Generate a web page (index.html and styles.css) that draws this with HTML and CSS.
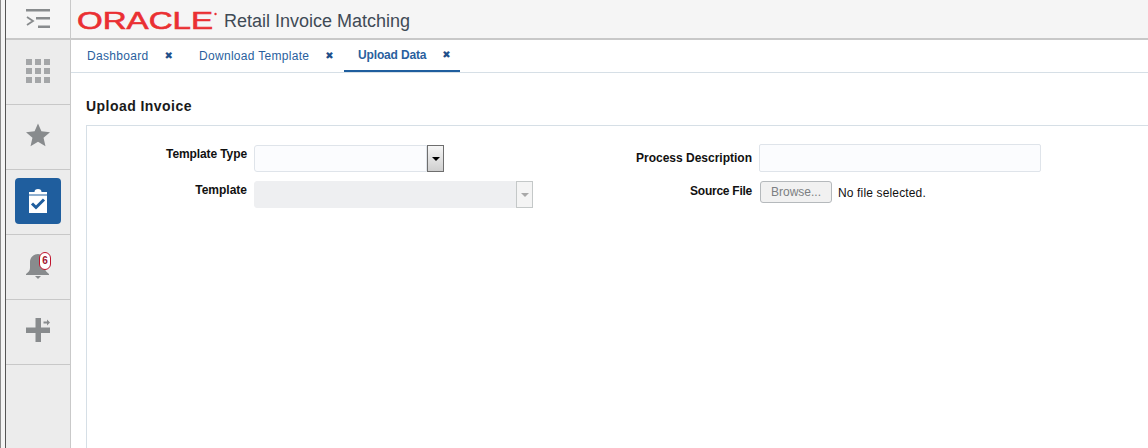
FILE: index.html
```html
<!DOCTYPE html>
<html lang="en">
<head>
<meta charset="utf-8">
<title>Retail Invoice Matching</title>
<link rel="stylesheet" href="styles.css">
</head>
<body>
<div class="app">
  <div class="edge"></div>
  <nav class="rail">
    <div class="rail-top">
      <svg width="24" height="20" viewBox="0 0 24 20"><path d="M0 0h24v2.600H0zM10 8h14v2.600H10zM12 16.400h12V19H12z" fill="#888b8d"/><path d="M1 8l6 4-6 4" fill="none" stroke="#888b8d" stroke-width="1.800"/></svg>
    </div>
    <div class="rail-item lift-2">
      <svg width="24" height="24" viewBox="0 0 24 24" fill="#a4a6a8"><path d="M0 0h6v6H0zM9 0h6v6H9zM18 0h6v6h-6zM0 9h6v6H0zM9 9h6v6H9zM18 9h6v6h-6zM0 18h6v6H0zM9 18h6v6H9zM18 18h6v6h-6z"/></svg>
    </div>
    <div class="rail-item lift-5">
      <svg width="24" height="24" viewBox="0 0 26 25"><path d="M13 0l3.700 8.500 9.300.9-7 6.100 2.100 9.300L13 19.900l-8.100 4.900L7 15.500 0 9.400l9.300-.9z" fill="#888b8d"/></svg>
    </div>
    <div class="rail-item lift-2">
      <div class="active-tile">
        <svg width="18" height="24" viewBox="0 0 18 24"><path d="M0 3h5.500a3.500 3 0 0 1 7 0H18v21H0z" fill="#fff"/><path d="M0 5.500h18v1H0z" fill="#1f5e9e"/><path d="M3 14.500l4 4 8-8" fill="none" stroke="#1f5e9e" stroke-width="3"/></svg>
      </div>
    </div>
    <div class="rail-item lift-2">
      <div class="bell">
        <svg width="26" height="26" viewBox="0 0 26 26"><path d="M13 1c4 0 7 3 7 8v6c0 3 2 4 4 6v1H1v-1c2-2 4-3 4-6V9c0-5 4-8 8-8z" fill="#888b8d"/><path d="M10 23h6l-3 3z" fill="#888b8d"/></svg>
        <span class="badge">6</span>
      </div>
    </div>
    <div class="rail-item lift-4">
      <svg width="24" height="24" viewBox="0 0 24 24" fill="#888b8d"><path d="M9.500 0h5.500v9.500h9v5.500h-9v9H9.500v-9H0V9.500h9.500z"/><path d="M17.500 3.500h3.500V1.500L24 4.500l-3 3V5.500h-3.500z"/></svg>
    </div>
  </nav>
  <div class="main">
    <header class="brandbar">
      <svg class="logo" width="142" height="34" viewBox="0 0 142 34"><text x="0" y="28" textLength="136" lengthAdjust="spacingAndGlyphs" font-family="Liberation Sans, sans-serif" font-size="24" font-weight="400" fill="#ea2f32" stroke="#ea2f32" stroke-width=".6">ORACLE</text><circle cx="138.500" cy="13" r="1.200" fill="#ea2f32"/></svg>
      <span class="product">Retail Invoice Matching</span>
    </header>
    <div class="tabs">
      <div class="tab"><a>Dashboard</a><span class="close">✖</span></div>
      <div class="tab"><a>Download Template</a><span class="close">✖</span></div>
      <div class="tab current"><a>Upload Data</a><span class="close">✖</span></div>
    </div>
    <section class="content">
      <h1>Upload Invoice</h1>
      <div class="panel">
        <div class="form">
          <div class="col col-left">
            <div class="row row-type">
              <label>Template Type</label>
              <div class="select">
                <span class="field"></span>
                <span class="drop"><i></i></span>
              </div>
            </div>
            <div class="row row-template">
              <label>Template</label>
              <div class="select disabled">
                <span class="field"></span>
                <span class="drop"><i></i></span>
              </div>
            </div>
          </div>
          <div class="col col-right">
            <div class="row row-desc">
              <label>Process Description</label>
              <span class="textbox"></span>
            </div>
            <div class="row row-file">
              <label>Source File</label>
              <span class="browse">Browse...</span>
              <span class="nofile">No file selected.</span>
            </div>
          </div>
        </div>
      </div>
    </section>
  </div>
</div>
</body>
</html>
```

FILE: styles.css
```css
* { box-sizing: border-box; }
html, body { margin: 0; height: 100%; overflow: hidden; background: #fff; }
body { font-family: "Liberation Sans", Arial, sans-serif; color: #111; }
.app { display: flex; height: 448px; width: 1148px; }
.edge { width: 6px; flex: none; border-left: 1px solid #8a8a8a; border-right: 1px solid #555; background: #f4f4f4; }
.rail { width: 65px; flex: none; background: #ececec; border-right: 1px solid #c9c9c9; display: flex; flex-direction: column; }
.rail-top { height: 40px; flex: none; display: flex; align-items: center; justify-content: center; background: #f5f5f5; border-bottom: 2px solid #c8c8c8; }
.rail-item { height: 65px; flex: none; display: flex; align-items: center; justify-content: center; border-bottom: 1px solid #c8c8c8; }
.lift-2 { padding-bottom: 2px; }
.lift-4 { padding-bottom: 4px; }
.lift-5 { padding-bottom: 5px; }
.active-tile { width: 46px; height: 46px; border-radius: 4px; background: #1f5e9e; display: flex; align-items: center; justify-content: center; }
.bell { position: relative; width: 26px; height: 26px; }
.badge { position: absolute; left: 14px; top: -1px; width: 12px; height: 18px; border-radius: 6px; border: 1.500px solid #c0142d; background: #fff; color: #a4142d; font-size: 10px; font-weight: 700; line-height: 15px; text-align: center; }
.main { flex: 1; min-width: 0; display: flex; flex-direction: column; }
.brandbar { height: 40px; flex: none; background: #f5f5f5; border-bottom: 2px solid #c8c8c8; display: flex; align-items: center; padding-left: 6px; }
.logo { flex: none; margin-top: -2px; }
.product { margin-left: 5px; font-size: 18px; color: #3f4a55; margin-top: 5px; }
.tabs { height: 33px; flex: none; display: flex; border-bottom: 1px solid #d6dfe6; padding-left: 2px; }
.tab { display: flex; align-items: center; height: 32px; padding: 0 14px; color: #2a5f9e; font-size: 12px; white-space: nowrap; }
.tab a { letter-spacing: .3px; margin-top: -1px; }
.tab .close { font-size: 10px; color: #1f4f8a; margin-left: 16px; margin-top: -1px; font-family: "DejaVu Sans", sans-serif; }
.tab:nth-child(1) { width: 113px; }
.tab:nth-child(2) { width: 158px; padding-left: 13px; }
.tab.current { width: 116px; border-bottom: 2px solid #1f5e9e; height: 32px; font-weight: 700; }
.tab.current a { letter-spacing: -.15px; }
.content { flex: 1; min-height: 0; padding: 24px 0 0 15px; }
h1 { margin: 0; font-size: 14px; line-height: 18px; font-weight: 700; color: #1a1a1a; letter-spacing: .45px; }
.panel { margin-top: 10px; height: 331px; border: 1px solid #d6dfe6; border-right: 0; }
.form { display: flex; padding-top: 19px; }
.col-left { width: 448px; flex: none; }
.col-right { flex: 1; }
.row { display: flex; }
label { font-size: 12px; font-weight: 700; text-align: right; color: #111; flex: none; }
.col-left label { width: 160px; margin-right: 7px; }
.col-right label { width: 217px; margin-right: 7px; }
.row-type { height: 27px; align-items: flex-start; }
.row-type label { margin-top: 2px; letter-spacing: -.1px; }
.row-template { margin-top: 9px; height: 27px; }
.row-template label { margin-top: 2px; }
.select { display: flex; height: 27px; }
.field { display: block; background: #fbfcfe; border: 1px solid #dfe4ea; border-radius: 3px 0 0 3px; }
.row-type .field { width: 173px; }
.row-template .field { width: 262px; background: #eeeff1; border-color: #eeeff1; }
.drop { width: 17px; height: 27px; display: flex; align-items: center; justify-content: center; border: 1.500px solid #6e6e6e; background: linear-gradient(#f6f6f6, #cfcfcf); }
.drop i { width: 0; height: 0; border-left: 4px solid transparent; border-right: 4px solid transparent; border-top: 4px solid #000; }
.disabled .drop { border: 1.500px solid #c4c8c8; background: #f4f4f4; }
.disabled .drop i { border-top-color: #a8a8a8; }
.row-desc { height: 28px; margin-top: -1px; }
.row-desc label { margin-top: 7px; }
.textbox { display: block; width: 282px; height: 28px; background: #fbfcfe; border: 1px solid #dfe4ea; border-radius: 2px; }
.row-file { margin-top: 9px; align-items: flex-start; }
.row-file label { margin-top: 3px; letter-spacing: -.25px; }
.browse { margin-left: 1px; width: 72px; height: 22px; border: 1px solid #b5b9bc; border-radius: 3px; background: #f1f1f1; color: #7c7f82; font-size: 12px; line-height: 20px; text-align: center; }
.nofile { margin-left: 6px; font-size: 12px; line-height: 24px; color: #111; letter-spacing: .15px; }
```
